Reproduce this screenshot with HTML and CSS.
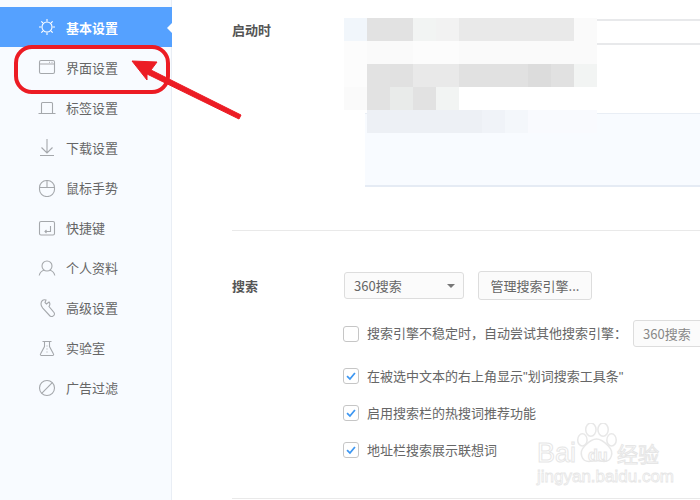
FILE: index.html
```html
<!DOCTYPE html>
<html lang="zh-CN">
<head>
<meta charset="utf-8">
<title>基本设置</title>
<link rel="stylesheet" href="styles.css">
</head>
<body>
<div class="app">
  <nav class="sidebar">
    <a class="nav-item active"><svg class="ico" viewBox="0 0 18 18"><circle cx="9" cy="8" r="5"/><path d="M9 0v2.400M9 13.600v2.400M1 8h2.400M14.600 8h2.400M3.300 2.300l1.700 1.700M13 12l1.700 1.700M3.300 13.700l1.700-1.700M13 4l1.700-1.700"/></svg><span>基本设置</span></a>
    <a class="nav-item"><svg class="ico" viewBox="0 0 18 18"><rect x="1.500" y="1.500" width="15" height="13" rx="1.500"/><path d="M1.500 5h15M11 3.300h1M13.500 3.300h1"/></svg><span>界面设置</span></a>
    <a class="nav-item"><svg class="ico" viewBox="0 0 18 18"><path d="M3.500 14.500V4.500a1 1 0 0 1 1-1h9a1 1 0 0 1 1 1v10M.5 14.500h17"/></svg><span>标签设置</span></a>
    <a class="nav-item"><svg class="ico" viewBox="0 0 18 18"><path d="M9 0v14M3.500 8.500 9 14l5.500-5.500M2 16.500h14"/></svg><span>下载设置</span></a>
    <a class="nav-item"><svg class="ico" viewBox="0 0 18 18"><rect x="1.500" y="1.500" width="15" height="16" rx="7"/><path d="M1.500 8.500h15M9 1.500v7"/></svg><span>鼠标手势</span></a>
    <a class="nav-item"><svg class="ico" viewBox="0 0 18 18"><rect x="1.500" y="2.500" width="15" height="13.500" rx="1.500"/><path d="M12.500 7v5.500H7M8.500 11l-1.500 1.500L8.500 14"/></svg><span>快捷键</span></a>
    <a class="nav-item"><svg class="ico" viewBox="0 0 18 18"><circle cx="9" cy="7" r="5"/><path d="M1.200 16.500c.7-3 2.800-4.800 5-5.500M16.800 16.500c-.7-3-2.800-4.800-5-5.500"/></svg><span>个人资料</span></a>
    <a class="nav-item"><svg class="ico" viewBox="0 0 18 18"><path d="M8 1C5 0 3 2 3 5c0 2 1 3 2 4.500L12 17c1.500 1.200 4.500 0 4.500-2 0-1-.5-1.700-1-2.200L11 7.500c1-1.500 1-3.500 0-4.500L8.500 5 7 3.500z"/></svg><span>高级设置</span></a>
    <a class="nav-item"><svg class="ico" viewBox="0 0 18 18"><path d="M4.500 2.500h9M6.500 2.500v5L2.500 15a1 1 0 0 0 1 1.500h11a1 1 0 0 0 1-1.500l-4-7.500v-5M8.500 7h1M8.500 10h1M8.500 13h1"/></svg><span>实验室</span></a>
    <a class="nav-item"><svg class="ico" viewBox="0 0 18 18"><circle cx="9" cy="9" r="7.500"/><path d="M14.300 3.700 3.700 14.300"/></svg><span>广告过滤</span></a>
  </nav>

  <main class="content">
    <section class="section startup">
      <h2 class="label">启动时</h2>
      <div class="body">
        <div class="line-box"></div>
        <div class="blue-box"></div>
        <div class="mosaic">
          <i class="t1"></i><i class="t2"></i><i class="t2"></i><i class="t3"></i><i class="t4"></i><i class="t5"></i><i class="t5"></i><i class="t5"></i><i class="t5"></i><i class="t5"></i><i class="t6"></i>
          <i class="t7"></i><i class="t6"></i><i class="t6"></i><i class="t7"></i><i class="t7"></i><i class="t6"></i><i class="t6"></i><i class="t6"></i><i class="t6"></i><i class="t6"></i><i class="t6"></i>
          <i class="t7"></i><i class="t2"></i><i class="t8"></i><i class="t5"></i><i class="t5"></i><i class="t8"></i><i class="t8"></i><i class="t8"></i><i class="t9"></i><i class="t8"></i><i class="t3"></i>
          <i class="t6"></i><i class="t2"></i><i class="t4b"></i><i class="t2"></i><i class="t3"></i><i class="t0"></i><i class="t0"></i><i class="t0"></i><i class="t0"></i><i class="t0"></i><i class="t0"></i>
          <i class="t0"></i><i class="t10"></i><i class="t10"></i><i class="t10"></i><i class="t10"></i><i class="t10"></i><i class="t11"></i><i class="t12"></i><i class="t13"></i><i class="t13"></i><i class="t13"></i>
        </div>
      </div>
    </section>

    <section class="section search">
      <h2 class="label">搜索</h2>
      <div class="body">
        <div class="controls">
          <div class="select wide">360搜索<b class="caret"></b></div>
          <button class="btn">管理搜索引擎...</button>
        </div>
        <div class="option first">
          <span class="check"></span><span class="opt-text">搜索引擎不稳定时，自动尝试其他搜索引擎：</span>
          <div class="select muted">360搜索<b class="caret"></b></div>
        </div>
        <div class="option second">
          <span class="check"><svg viewBox="0 0 16 16"><path d="M3.500 8.200 6.800 11.500 12.500 4.500"/></svg></span><span class="opt-text">在被选中文本的右上角显示<span class="q">"</span>划词搜索工具条<span class="q">"</span></span>
        </div>
        <div class="option tight">
          <span class="check"><svg viewBox="0 0 16 16"><path d="M3.500 8.200 6.800 11.500 12.500 4.500"/></svg></span><span class="opt-text">启用搜索栏的热搜词推荐功能</span>
        </div>
        <div class="option tight">
          <span class="check"><svg viewBox="0 0 16 16"><path d="M3.500 8.200 6.800 11.500 12.500 4.500"/></svg></span><span class="opt-text">地址栏搜索展示联想词</span>
        </div>
      </div>
    </section>
  </main>
</div>

<div class="ring"></div>
<svg class="arrow" viewBox="0 0 700 500"><path class="arrow-head" d="M132 61 157 62 151 70 241 115 239 119 147 74 147 80z"/></svg>

<div class="watermark">
  <svg class="paw" viewBox="0 0 50 50"><ellipse cx="10" cy="18" rx="5" ry="6.500"/><ellipse cx="19" cy="7" rx="5.500" ry="7"/><ellipse cx="32" cy="7" rx="5.500" ry="7"/><ellipse cx="41" cy="18" rx="5" ry="6.500"/><path d="M25 17c6 0 9 4 13 8 6 6 3 16-5 16-3 0-5-1-8-1s-5 1-8 1c-8 0-11-10-5-16 4-4 7-8 13-8z"/></svg>
  <div class="wm-main"><span class="wm-bai">Bai</span><span class="wm-du">du</span><span class="wm-cn">经验</span></div>
  <div class="wm-url">jingyan.baidu.com</div>
</div>
</body>
</html>
```
FILE: styles.css
```css
* { box-sizing: border-box; }
html, body { margin: 0; height: 100%; overflow: hidden; background: #fff; }
body {
  position: relative;
  font-family: "Noto Sans CJK SC", "Liberation Sans", sans-serif;
  font-size: 13px;
  color: #666;
}
.app { display: flex; height: 500px; }

.sidebar {
  width: 172px;
  flex: none;
  padding-top: 7px;
  background: #f8fbff;
  border-right: 1px solid #e9eef5;
}
.nav-item {
  position: relative;
  display: flex;
  align-items: center;
  gap: 10px;
  height: 40px;
  padding-left: 38px;
  line-height: 18px;
  white-space: nowrap;
}
.nav-item span { padding-top: 1px; }
.ico {
  width: 18px;
  height: 18px;
  flex: none;
  margin-top: 2px;
  fill: none;
  stroke: #a5a8ac;
  stroke-width: 1.1;
}
.nav-item.active {
  margin-right: -1px;
  background: #55a1ff;
  color: #fff;
  font-weight: 700;
}
.nav-item.active .ico { stroke: #fff; }
.nav-item.active::after {
  content: "";
  position: absolute;
  right: 0;
  top: 16px;
  border: 5px solid transparent;
  border-left: 0;
  border-right-color: #fff;
}

.content { flex: 1; min-width: 0; padding-left: 60px; overflow: hidden; }
.section { display: flex; border-bottom: 1px solid #e9e9e9; }
.label {
  width: 112px;
  flex: none;
  margin: 0;
  font-size: 13px;
  font-weight: 700;
  line-height: 18px;
  color: #555;
}
.body { position: relative; flex: 1; min-width: 0; }

.startup { height: 231px; padding-top: 21px; }
.startup .body { margin-top: -2px; }
.line-box {
  height: 26px;
  border-top: 2px solid #e8e9eb;
  border-bottom: 2px solid #e8e9eb;
  margin-right: -100px;
}
.blue-box {
  height: 74px;
  margin: 68px -100px 0 21px;
  background: #f8fbff;
  border-top: 1px solid #e9eef5;
  border-bottom: 2px solid #e5ebf4;
}
.mosaic {
  position: absolute;
  left: 0;
  top: -1px;
  display: grid;
  grid-template-columns: repeat(11, 23px);
  grid-auto-rows: 23px;
}
.mosaic i { display: block; }
.t0 { background: transparent; }
.t1 { background: #f1f6fb; }
.t2 { background: #e2e2e2; }
.t3 { background: #f2f4f3; }
.t4 { background: #f2f2f2; }
.t4b { background: #e9ebea; }
.t5 { background: #e9e9e9; }
.t6 { background: #fafafa; }
.t7 { background: #fcfcfc; }
.t8 { background: #e1e1e1; }
.t9 { background: #dcdcdc; }
.t10 { background: #edf0f5; }
.t11 { background: #f0f3f8; }
.t12 { background: #f4f7fb; }
.t13 { background: #f9fafe; }

.search { height: 268px; padding-top: 45px; }
.search .label { padding-top: 1px; }
.controls { display: flex; align-items: center; gap: 14px; margin-top: -5px; }
.select {
  position: relative;
  height: 27px;
  padding-left: 9px;
  line-height: 25px;
  background: #fbfbfb;
  border: 1px solid #ddd;
  border-radius: 3px;
  white-space: nowrap;
  flex: none;
}
.select.wide { width: 120px; }
.select.muted { width: 90px; margin-left: -2px; color: #888; }
.caret {
  position: absolute;
  right: 8px;
  top: 11px;
  border: 4px solid transparent;
  border-bottom: 0;
  border-top: 4px solid #777;
}
.btn {
  width: 114px;
  height: 29px;
  padding: 0;
  font: inherit;
  color: #666;
  background: #fbfbfb;
  border: 1px solid #ddd;
  border-radius: 3px;
}
.option {
  display: flex;
  align-items: center;
  gap: 8px;
  margin-left: -1px;
  white-space: nowrap;
}
.opt-text { margin-bottom: 2px; }
.q { font-family: "Liberation Sans", sans-serif; }
.option.first { height: 27px; margin-top: 20px; }
.option.second { margin-top: 20px; height: 18px; }
.option.tight { margin-top: 19px; height: 18px; }
.check {
  width: 16px;
  height: 16px;
  flex: none;
  background: #fff;
  border: 1px solid #c6c6c6;
  border-radius: 3px;
}
.check svg {
  display: block;
  width: 14px;
  height: 14px;
  fill: none;
  stroke: #3d97f2;
  stroke-width: 2;
}

.ring {
  position: absolute;
  left: 14px;
  top: 45px;
  width: 156px;
  height: 49px;
  border: 4px solid #ec1c24;
  border-radius: 18px;
}
.arrow { position: absolute; left: 0; top: 0; width: 700px; height: 500px; }
.arrow-head { fill: #ec1c24; stroke: #ec1c24; stroke-width: 1; stroke-linejoin: round; }

.watermark { position: absolute; left: 537px; top: 424px; width: 125px; height: 62px; }
.paw {
  position: absolute;
  left: 36px;
  top: -1px;
  width: 47px;
  height: 47px;
  fill: #fff;
  stroke: #e8e8e8;
  stroke-width: 1.6;
}
.wm-main {
  position: absolute;
  left: 0;
  top: 15px;
  display: flex;
  align-items: center;
  line-height: 28px;
  color: #fff;
  font-family: "Liberation Sans", sans-serif;
  font-size: 27px;
  -webkit-text-stroke: 1px #e6e6e6;
}
.wm-du { width: 41px; padding: 5px 0 0 12px; font-size: 16px; line-height: 20px; font-weight: 700; }
.wm-cn { font-family: "Noto Sans CJK SC", sans-serif; font-size: 21px; }
.wm-url {
  position: absolute;
  left: 0;
  top: 44px;
  font-family: "Liberation Sans", sans-serif;
  font-size: 17px;
  line-height: 17px;
  color: #fff;
  -webkit-text-stroke: .8px #e6e6e6;
  white-space: nowrap;
}
```
